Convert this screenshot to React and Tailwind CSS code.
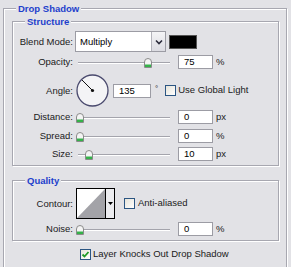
import React from "react";

const FONT = { fontFamily: '"Liberation Sans", Arial, sans-serif' };

function Thumb({ left }) {
  return (
    <svg
      width="8"
      height="10"
      viewBox="0 0 8 10"
      className="absolute top-[3px]"
      style={{ left }}
    >
      <path d="M0.5 9.5V4A3.5 3.5 0 0 1 7.5 4V9.5Z" fill="#f4f4f4" stroke="#8a8a8a" />
      <rect x="1" y="6.5" width="6" height="2.5" fill="#35b24a" />
    </svg>
  );
}

function Slider({ left }) {
  return (
    <div className="relative w-[98px] h-[14px] shrink-0">
      <div className="absolute left-[3px] top-[7px] w-[92px] h-[2px] border-t border-[#a4a4ac] bg-white" />
      <Thumb left={left} />
    </div>
  );
}

function Field({ value, w = "w-[35px]" }) {
  return (
    <div className={`${w} h-[14px] bg-white border border-[#9c9ca4] pl-[5px] text-[9.5px] leading-[12px] text-black shrink-0`}>
      {value}
    </div>
  );
}

function Label({ children }) {
  return (
    <div className="w-[60px] shrink-0 text-right text-[9.5px] leading-[12px] text-[#1a1a1a]">
      {children}
    </div>
  );
}

function Checkbox({ checked }) {
  return (
    <div className="w-[11px] h-[11px] border border-[#2b5582] bg-gradient-to-br from-[#e6e4da] to-white flex items-center justify-center shrink-0">
      {checked && (
        <svg width="9" height="9" viewBox="0 0 9 9">
          <path d="M1.5 4.5L3.5 6.5L7.5 2" fill="none" stroke="#1f9a26" strokeWidth="1.8" />
        </svg>
      )}
    </div>
  );
}

function SliderRow({ label, left, value, unit, mt }) {
  return (
    <div className={`flex items-center h-[14px] ${mt}`}>
      <Label>{label}</Label>
      <div className="w-[2px]" />
      <Slider left={left} />
      <div className="w-[5px]" />
      <Field value={value} />
      <span className="ml-[3px] text-[9.5px] text-[#1a1a1a]">{unit}</span>
    </div>
  );
}

const fieldsetCls =
  "border border-[#a7a7b0] shadow-[inset_1px_1px_0_#fff,1px_1px_0_#fff]";
const legendCls =
  "h-[13px] leading-[13px] px-[2px] text-[9.5px] font-bold text-[#1d3fcc] bg-[#e2e2e6]";

export default function App() {
  return (
    <div className="w-[291px] h-[267px] overflow-hidden bg-[#e2e2e6] pt-[2px] pl-[3px]" style={FONT}>
      <fieldset className={`${fieldsetCls} w-[284px] h-[300px]`}>
        <legend className={`${legendCls} ml-[12px]`}>Drop Shadow</legend>

        {/* Structure */}
        <fieldset className={`${fieldsetCls} ml-[8px] w-[267px] pb-[4px]`}>
          <legend className={`${legendCls} ml-[12px]`}>Structure</legend>

          <div className="flex items-center h-[21px] mt-[3px]">
            <Label>Blend Mode:</Label>
            <div className="w-[2px]" />
            <div className="w-[91px] h-[21px] bg-white border border-[#9c9ca4] flex items-stretch">
              <div className="flex-1 pl-[4px] text-[9.5px] leading-[19px] text-black">Multiply</div>
              <div className="w-[14px] border-l border-[#b4b4bc] bg-gradient-to-b from-[#f4f4f6] to-[#dcdce2] flex items-center justify-center">
                <svg width="8" height="6" viewBox="0 0 8 6">
                  <path d="M1 1.5L4 4.5L7 1.5" fill="none" stroke="#2a2a3a" strokeWidth="1.6" />
                </svg>
              </div>
            </div>
            <div className="ml-[3px] w-[28px] h-[14px] bg-black border border-[#555]" />
          </div>

          <SliderRow label="Opacity:" left={69} value="75" unit="%" mt="mt-[3px]" />

          <div className="flex items-center h-[33px] mt-[5px]">
            <Label>Angle:</Label>
            <div className="w-[3px]" />
            <svg width="33" height="33" viewBox="0 0 33 33" className="shrink-0">
              <circle cx="16.5" cy="16.5" r="15.5" fill="#f4f4f6" stroke="#4a4a6e" strokeWidth="1.3" />
              <line x1="16.5" y1="16.5" x2="6" y2="6" stroke="#111" strokeWidth="1" />
              <circle cx="16.5" cy="16.5" r="1.6" fill="#111" />
            </svg>
            <div className="w-[4px]" />
            <Field value="135" w="w-[38px]" />
            <span className="ml-[4px] self-start mt-[9px] text-[8px] text-[#1a1a1a]">°</span>
            <div className="ml-[7px]">
              <Checkbox />
            </div>
            <span className="ml-[2px] text-[9.5px] text-[#1a1a1a]">Use Global Light</span>
          </div>

          <SliderRow label="Distance:" left={1} value="0" unit="px" mt="mt-[3px]" />
          <SliderRow label="Spread:" left={1} value="0" unit="%" mt="mt-[5px]" />
          <SliderRow label="Size:" left={10} value="10" unit="px" mt="mt-[4px]" />
        </fieldset>

        {/* Quality */}
        <fieldset className={`${fieldsetCls} ml-[8px] mt-[8px] w-[267px] pb-[4px]`}>
          <legend className={`${legendCls} ml-[12px]`}>Quality</legend>

          <div className="flex items-center h-[31px] mt-[1px]">
            <Label>Contour:</Label>
            <div className="w-[3px]" />
            <div className="w-[39px] h-[31px] border border-black flex bg-white">
              <svg width="28" height="29" viewBox="0 0 28 29" className="shrink-0">
                <polygon points="0,29 28,0 28,29" fill="#a3a3a8" />
              </svg>
              <div className="flex-1 border-l border-black bg-[#ececef] flex items-center justify-center">
                <svg width="5" height="3" viewBox="0 0 5 3">
                  <polygon points="0,0 5,0 2.5,3" fill="#000" />
                </svg>
              </div>
            </div>
            <div className="ml-[9px]">
              <Checkbox />
            </div>
            <span className="ml-[3px] text-[9.5px] text-[#1a1a1a]">Anti-aliased</span>
          </div>

          <SliderRow label="Noise:" left={1} value="0" unit="%" mt="mt-[3px]" />
        </fieldset>

        <div className="flex items-center mt-[6px] ml-[76px]">
          <Checkbox checked />
          <span className="ml-[2px] text-[9.5px] text-[#1a1a1a]">Layer Knocks Out Drop Shadow</span>
        </div>
      </fieldset>
    </div>
  );
}
